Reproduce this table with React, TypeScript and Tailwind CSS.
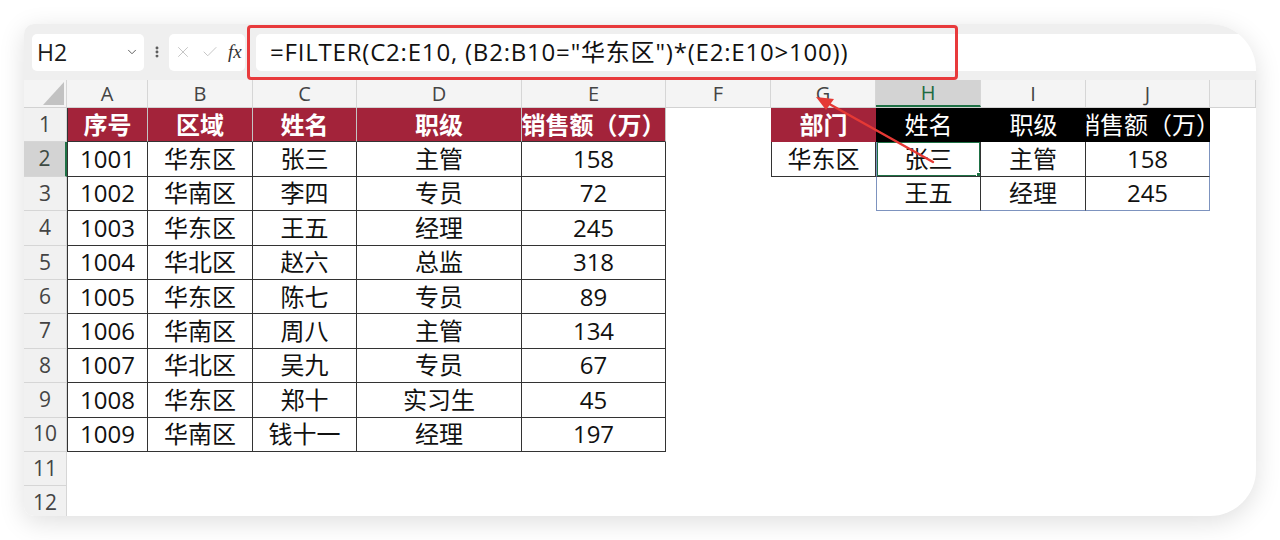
import { Check, ChevronDown, EllipsisVertical, X } from "lucide-react";

type CellDef = { text?: string; cls: string };

const colLetters = ["A", "B", "C", "D", "E", "F", "G", "H", "I", "J", ""];

const rows: string[][] = [
	["1001", "华东区", "张三", "主管", "158"],
	["1002", "华南区", "李四", "专员", "72"],
	["1003", "华东区", "王五", "经理", "245"],
	["1004", "华北区", "赵六", "总监", "318"],
	["1005", "华东区", "陈七", "专员", "89"],
	["1006", "华南区", "周八", "主管", "134"],
	["1007", "华北区", "吴九", "专员", "67"],
	["1008", "华东区", "郑十", "实习生", "45"],
	["1009", "华南区", "钱十一", "经理", "197"],
];

const heads = ["序号", "区域", "姓名", "职级", "销售额（万）"];

const redHead = "bg-[#a3233a] text-white font-bold border-r border-b border-r-[#c4c4c4] border-b-[#333]";
const dataFirst = "border-l border-r border-b border-[#333]";
const data = "border-r border-b border-[#333]";
const blackHead = "bg-black text-white";
const empty = "";

function buildRow(r: number): CellDef[] {
	if (r === 1) {
		return [
			...heads.map((h, i) => ({ text: h, cls: i === 0 ? redHead + " border-l border-l-[#333]" : redHead })),
			{ cls: empty },
			{ text: "部门", cls: "bg-[#a3233a] text-white font-bold" },
			{ text: "姓名", cls: blackHead },
			{ text: "职级", cls: blackHead },
			{ text: "销售额（万）", cls: blackHead },
			{ cls: empty },
		];
	}
	if (r >= 2 && r <= 10) {
		const vals = rows[r - 2];
		const base: CellDef[] = vals.map((v, i) => ({ text: v, cls: i === 0 ? dataFirst : data }));
		base.push({ cls: empty });
		if (r === 2) {
			base.push({ text: "华东区", cls: "border-l border-r border-b border-[#333]" });
			base.push({ text: "张三", cls: "border-l border-r border-b border-l-[#7d93bf] border-r-[#333] border-b-[#333] relative" });
			base.push({ text: "主管", cls: "border-r border-b border-[#333]" });
			base.push({ text: "158", cls: "border-r border-b border-r-[#7d93bf] border-b-[#333]" });
		} else if (r === 3) {
			base.push({ cls: empty });
			base.push({ text: "王五", cls: "border-l border-r border-b border-l-[#7d93bf] border-r-[#333] border-b-[#7d93bf]" });
			base.push({ text: "经理", cls: "border-r border-b border-r-[#333] border-b-[#7d93bf]" });
			base.push({ text: "245", cls: "border-r border-b border-[#7d93bf]" });
		} else {
			base.push({ cls: empty }, { cls: empty }, { cls: empty }, { cls: empty });
		}
		base.push({ cls: empty });
		return base;
	}
	return Array.from({ length: 11 }, () => ({ cls: empty }));
}

const gridCols =
	"grid grid-cols-[43px_81px_105px_104px_165px_144px_105px_105px_105px_105px_124px_1fr]";

export default function App() {
	return (
		<div className="relative w-[1280px] h-[540px] overflow-hidden bg-white pl-[24px] pt-[24px] font-['Open_Sans','Noto_Sans_CJK_SC',sans-serif] text-[#111]">
			<div className="flex w-[1232px] h-[492px] flex-col overflow-hidden rounded-l-[10px] rounded-r-[46px] bg-white shadow-[0_6px_26px_rgba(0,0,0,0.13)]">
				{/* Formula bar */}
				<div className="flex h-[56px] shrink-0 items-center bg-[#efefef] pl-[8px]">
					<div className="flex h-[37px] w-[112px] items-center justify-between rounded-[5px] bg-white pl-[5px] pr-[5px]">
						<span className="text-[23px] leading-none text-[#1c1c1c]">H2</span>
						<ChevronDown className="size-[14px] text-[#555]" strokeWidth={1.6} />
					</div>
					<div className="flex w-[25px] justify-center">
						<EllipsisVertical className="size-[14px] text-[#555]" strokeWidth={3} />
					</div>
					<div className="flex h-[37px] w-[76px] items-center gap-[9px] rounded-[5px] bg-white pl-[5px]">
						<X className="size-[18px] text-[#c4c4c4]" strokeWidth={1.3} />
						<Check className="size-[18px] text-[#c4c4c4]" strokeWidth={1.3} />
						<span className="font-['Liberation_Serif',serif] text-[19px] italic text-[#333]">fx</span>
					</div>
					<div className="ml-[11px] flex h-[37px] flex-1 items-center rounded-l-[5px] bg-white pl-[14px]">
						<span className="whitespace-nowrap text-[24px] leading-none tracking-[0.8px] text-[#111]">
							=FILTER(C2:E10, (B2:B10="华东区")*(E2:E10&gt;100))
						</span>
					</div>
				</div>

				{/* Column headers */}
				<div className={`${gridCols} h-[28px] shrink-0 bg-[#f4f4f4] border-b border-[#d2d2d2]`}>
					<div className="relative border-r border-[#d6d6d6]">
						<svg className="absolute left-[19px] top-[2px]" width="22" height="23" viewBox="0 0 22 23">
							<polygon points="21,0 21,23 0,23" fill="#c2c2c2" />
						</svg>
					</div>
					{colLetters.map((c, i) => (
						<div
							key={i}
							className={
								c === "H"
									? "flex items-center justify-center bg-[#d3d3d3] text-[20px] leading-none text-[#1e6b41] border-r border-r-[#d6d6d6] border-b-2 border-b-[#1e7145]"
									: "flex items-center justify-center text-[20px] leading-none text-[#444] border-r border-[#d6d6d6]"
							}
						>
							{c}
						</div>
					))}
				</div>

				{/* Rows */}
				{Array.from({ length: 12 }, (_, idx) => idx + 1).map((r) => (
					<div key={r} className={`${gridCols} h-[34.4px] shrink-0`}>
						<div
							className={
								r === 2
									? "flex items-center justify-center bg-[#d3d3d3] text-[21px] text-[#3c4a42] border-b border-b-[#d6d6d6] border-r-2 border-r-[#1e7145]"
									: "flex items-center justify-center bg-[#f1f1f1] text-[21px] text-[#444] border-b border-r border-[#d6d6d6]"
							}
						>
							{r}
						</div>
						{buildRow(r).map((cell, i) => (
							<div
								key={i}
								className={`flex items-center justify-center overflow-hidden whitespace-nowrap text-[24px] leading-none ${cell.cls}`}
							>
								{cell.text}
								{r === 2 && i === 7 && (
									<div className="pointer-events-none absolute -inset-[1px] border-2 border-[#1e7145]">
										<div className="absolute -bottom-[4px] -right-[4px] size-[6px] bg-[#1e7145] ring-1 ring-white" />
									</div>
								)}
							</div>
						))}
					</div>
				))}
			</div>

			{/* Annotation: red box round the formula */}
			<div className="pointer-events-none absolute left-[247px] top-[25px] h-[55px] w-[711px] rounded-[4px] border-[3px] border-[#e83a3c]" />

			{/* Annotation: red arrow */}
			<svg className="pointer-events-none absolute left-0 top-0" width="1280" height="540" viewBox="0 0 1280 540">
				<line x1="933" y1="162" x2="824" y2="101" stroke="#e53935" strokeWidth="2.5" strokeLinecap="round" />
				<polygon points="816,97 834,99 826,110" fill="#e53935" />
			</svg>
		</div>
	);
}
